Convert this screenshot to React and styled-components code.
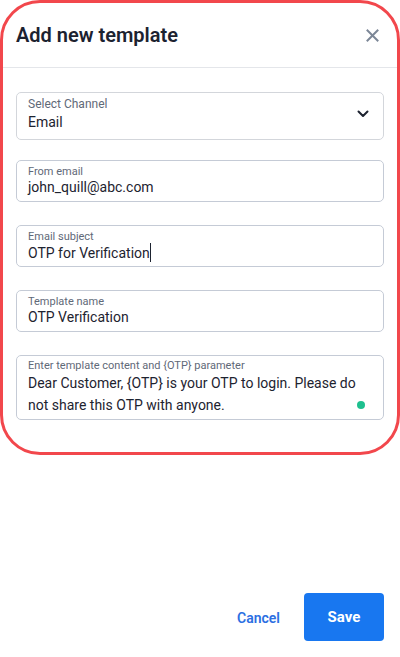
import React from "react";
import styled, { createGlobalStyle } from "styled-components";

const Global = createGlobalStyle`
  html, body { margin: 0; padding: 0; background: #fff; }
  body { font-family: Roboto, "Noto Sans", Arial, sans-serif; }
  * { box-sizing: border-box; }
`;

const Page = styled.div`
  width: 400px;
  height: 657px;
  display: flex;
  flex-direction: column;
  background: #fff;
`;

const Panel = styled.div`
  width: 400px;
  height: 455px;
  border: 3px solid #f2474c;
  border-radius: 40px;
  display: flex;
  flex-direction: column;
  overflow: hidden;
`;

const Header = styled.div`
  height: 65px;
  display: flex;
  align-items: center;
  justify-content: space-between;
  padding: 0 17px 0 13px;
  border-bottom: 1px solid #e4e6ea;
  flex-shrink: 0;
`;

const Title = styled.h1`
  margin: 0;
  font-size: 20px;
  font-weight: 600;
  color: #1c2230;
`;

const CloseBtn = styled.button`
  border: 0;
  background: none;
  padding: 0;
  width: 16px;
  height: 16px;
  display: flex;
  align-items: center;
  justify-content: center;
  color: #7c8797;
`;

const Form = styled.div`
  padding: 24px 13px 0 13px;
  display: flex;
  flex-direction: column;
`;

const Field = styled.div`
  position: relative;
  border: 1px solid ${(p) => (p.$select ? "#d3d6db" : "#c5cbd6")};
  border-radius: 5px;
  height: ${(p) => p.$h}px;
  margin-bottom: ${(p) => p.$mb}px;
  padding: ${(p) => p.$pt ?? 4}px 12px 0 11px;
  display: flex;
  flex-direction: column;
`;

const Label = styled.div`
  font-size: ${(p) => p.$size || 11}px;
  line-height: ${(p) => (p.$size === 12 ? 14 : 13)}px;
  color: #5f6978;
  white-space: nowrap;
`;

const Value = styled.div`
  font-size: 14px;
  line-height: ${(p) => p.$lh || 18}px;
  color: #1d2330;
  margin-top: ${(p) => p.$mt || 0}px;
`;

const Caret = styled.span`
  display: inline-block;
  width: 1px;
  height: 19px;
  background: #1d2330;
  vertical-align: -4px;
`;

const Chevron = styled.div`
  position: absolute;
  right: 14px;
  top: 17px;
  color: #1d2330;
  display: flex;
`;

const Dot = styled.span`
  position: absolute;
  right: 18px;
  bottom: 10px;
  width: 8px;
  height: 8px;
  border-radius: 50%;
  background: #1ec08f;
`;

const Footer = styled.div`
  margin-top: auto;
  display: flex;
  justify-content: flex-end;
  align-items: center;
  gap: 24px;
  padding: 0 16px 16px 0;
`;

const CancelBtn = styled.button`
  border: 0;
  background: none;
  font-family: inherit;
  font-size: 14px;
  font-weight: 600;
  color: #2c6fe2;
  padding: 0;
  margin-top: 2px;
`;

const SaveBtn = styled.button`
  width: 80px;
  height: 48px;
  border: 0;
  border-radius: 4px;
  background: #1877f0;
  color: #fff;
  font-family: inherit;
  font-size: 15px;
  font-weight: 700;
`;

const contentLabel = "Enter template content and {OTP} parameter";
const contentText =
  "Dear Customer, {OTP} is your OTP to login. Please do not share this OTP with anyone.";

export default function App() {
  return (
    <Page>
      <Global />
      <Panel>
        <Header>
          <Title>Add new template</Title>
          <CloseBtn aria-label="Close">
            <svg width="13" height="13" viewBox="0 0 13 13" fill="none" stroke="currentColor" strokeWidth="2" strokeLinecap="square">
              <path d="M1.5 1.5 L11.5 11.5 M11.5 1.5 L1.5 11.5" />
            </svg>
          </CloseBtn>
        </Header>
        <Form>
          <Field $select $h={48} $mb={20}>
            <Label $size={12}>Select Channel</Label>
            <Value $mt={2}>Email</Value>
            <Chevron>
              <svg width="12" height="8" viewBox="0 0 12 8" fill="none" stroke="currentColor" strokeWidth="2" strokeLinecap="round" strokeLinejoin="round">
                <path d="M1.5 1.5 L6 6 L10.5 1.5" />
              </svg>
            </Chevron>
          </Field>
          <Field $h={42} $mb={23}>
            <Label>From email</Label>
            <Value>john_quill@abc.com</Value>
          </Field>
          <Field $h={42} $mb={23}>
            <Label>Email subject</Label>
            <Value>
              OTP for Verification
              <Caret />
            </Value>
          </Field>
          <Field $h={42} $mb={23}>
            <Label>Template name</Label>
            <Value>OTP Verification</Value>
          </Field>
          <Field $h={65} $mb={0} $pt={3}>
            <Label>{contentLabel}</Label>
            <Value $lh={22}>{contentText}</Value>
            <Dot />
          </Field>
        </Form>
      </Panel>
      <Footer>
        <CancelBtn>Cancel</CancelBtn>
        <SaveBtn>Save</SaveBtn>
      </Footer>
    </Page>
  );
}
